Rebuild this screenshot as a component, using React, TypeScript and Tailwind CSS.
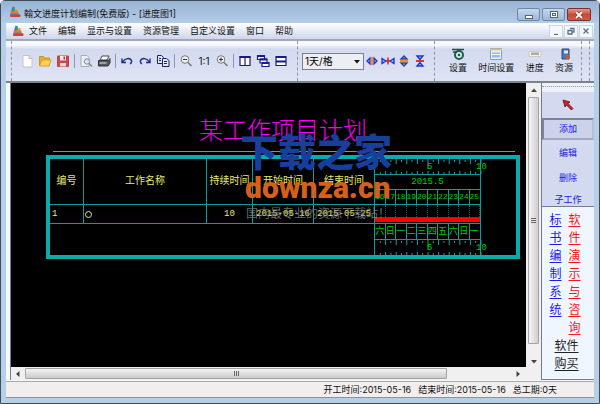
import React from "react";

const UI = "font-['Inter','Noto_Sans_CJK_SC',sans-serif]";
const CAD = "font-['Liberation_Mono','Noto_Sans_CJK_SC',monospace]";

function Logo() {
  return (
    <svg viewBox="0 0 12 12" className="size-3 shrink-0">
      <path d="M3.500 0.500L2 6h4V1.500z" fill="#3b78c8" />
      <path d="M4.500 1.500l1.500 1v4H3.500z" fill="#4fa04a" />
      <path d="M6.500 3h2v3.500h-3z" fill="#e8963a" />
      <rect x="1.500" y="5.500" width="8" height="2.800" rx="1" fill="#e07a3a" />
      <rect x="1" y="8.200" width="10.500" height="2.800" rx="1" fill="#c9433a" />
      <path d="M1.500 8.200h8" stroke="#3a7cc0" />
    </svg>
  );
}

function IconButton({ label, children }: { label: string; children: React.ReactNode }) {
  return (
    <button type="button" aria-label={label} className="flex w-[18px] shrink-0 justify-center">
      <svg viewBox="0 0 14 14" className="size-3.5" fill="none">
        {children}
      </svg>
    </button>
  );
}

const Sep = () => <span className="mx-[2px] h-3.5 w-px shrink-0 bg-[#8f97ad]" />;

function FileTools() {
  return (
    <>
      <IconButton label="新建">
        <path d="M3 1.500h6l3 3v8.500H3z" fill="#fff" stroke="#c2c2cc" />
        <path d="M9 1.500v3h3" stroke="#b5b5c0" />
      </IconButton>
      <IconButton label="打开">
        <path d="M1.500 11.500v-9h4l1 1.500h5v7.500z" fill="#e9ad2c" stroke="#cf9320" />
        <path d="M1.500 12l2.500-6h9l-2 6z" fill="#ffd25a" stroke="#dda22b" />
      </IconButton>
      <IconButton label="保存">
        <path d="M1.500 2h11v10.500h-11z" fill="#c8484c" stroke="#b8464a" />
        <path d="M4 2h6v4.500H4z" fill="#f6e9e9" />
        <path d="M7.500 2.500h1.500v3H7.500z" fill="#b43a3e" />
        <path d="M4 9h6v3.500H4z" fill="#eed0d0" />
      </IconButton>
      <Sep />
      <IconButton label="打印预览">
        <path d="M2 1.500h6l2 2v9H2z" fill="#eef0f6" stroke="#a5aab5" />
        <circle cx="8" cy="7.500" r="2.700" fill="#dbe6ee" stroke="#7f8b98" />
        <path d="M10 9.500l3 3" stroke="#7f8b98" strokeWidth="1.500" />
      </IconButton>
      <IconButton label="打印">
        <path d="M5 2h7l-2 4H3z" fill="#fff" stroke="#444" />
        <path d="M1.500 6.500h10l1.500-2v4.500l-2 3H1.500z" fill="#555b60" stroke="#2e3235" />
        <path d="M2.500 9h7" stroke="#e8e8e8" />
      </IconButton>
      <Sep />
      <IconButton label="撤销">
        <path d="M2 4.500v4h4M2.500 8C5 4 10 3.500 11.500 6.500c.5 1.500 0 2.500-1.500 3.500" stroke="#1c2a8c" strokeWidth="1.400" />
      </IconButton>
      <IconButton label="重做">
        <path d="M12 4.500v4H8M11.500 8C9 4 4 3.500 2.500 6.500c-.5 1.500 0 2.500 1.500 3.500" stroke="#1c2a8c" strokeWidth="1.400" />
      </IconButton>
      <IconButton label="复制">
        <path d="M1.500 1.500h4l2 2v6h-6z" fill="#dfe4f8" stroke="#1c2468" />
        <path d="M6.500 4.500h4l2.500 2v6H6.500z" fill="#dfe4f8" stroke="#1c2468" />
        <path d="M3 4.500h2M3 6.500h2M8 7.500h3M8 9.500h3" stroke="#1c2468" />
      </IconButton>
      <Sep />
      <IconButton label="缩小">
        <circle cx="6" cy="5.500" r="3.800" fill="#eef1f6" stroke="#777" />
        <path d="M4 5.500h4" stroke="#333" />
        <path d="M9 8.500l3.500 3.500" stroke="#777" strokeWidth="1.500" />
      </IconButton>
      <button type="button" className="w-[18px] text-center text-[10px] leading-4">1:1</button>
      <IconButton label="放大">
        <circle cx="6" cy="5.500" r="3.800" fill="#eef1f6" stroke="#777" />
        <path d="M4 5.500h4M6 3.500v4" stroke="#333" />
        <path d="M9 8.500l3.500 3.500" stroke="#777" strokeWidth="1.500" />
      </IconButton>
      <Sep />
      <IconButton label="垂直平铺">
        <path d="M2 2.500h10v9H2zM7 2.500v9" fill="#fff" stroke="#1a1a8c" strokeWidth="1.200" />
        <path d="M1.500 3h11" stroke="#1a1a8c" strokeWidth="2" />
      </IconButton>
      <IconButton label="层叠">
        <path d="M1.500 1.500h7v4h-7zM4 5h7v4H4zM6 8.500h7v4H6z" fill="#fff" stroke="#1a1a8c" strokeWidth="1.200" />
        <path d="M1.500 2h7M4 5.500h7M6 9h7" stroke="#1a1a8c" strokeWidth="1.800" />
      </IconButton>
      <IconButton label="水平平铺">
        <path d="M2 2.500h10v9H2z" fill="#fff" stroke="#1a1a8c" strokeWidth="1.200" />
        <path d="M2 3h10M2 7.500h10" stroke="#1a1a8c" strokeWidth="2" />
      </IconButton>
    </>
  );
}

function ScaleTools() {
  return (
    <>
      <label className="mr-[1px] flex">
        <span className="sr-only">时间刻度</span>
        <span className="relative flex">
          <select className="h-[17px] w-[62px] appearance-none border border-[#7c818c] bg-[#eceef2] pl-[2px] text-[10px] leading-[15px] text-black">
            <option>1天/格</option>
            <option>1周/格</option>
            <option>1月/格</option>
          </select>
          <svg viewBox="0 0 6 4" className="pointer-events-none absolute top-[7px] right-1 h-1 w-1.5">
            <path d="M0 0h6L3 3.500z" fill="#111" />
          </svg>
        </span>
      </label>
      <div className="flex gap-px">
        <button type="button" aria-label="加宽" className="w-[15px]">
          <svg viewBox="0 0 14 14" className="size-3.5" fill="none">
            <path d="M5 4L2 7L5 10zM9 4L12 7L9 10z" fill="#9db4ff" stroke="#2233cc" strokeWidth="1.300" />
            <path d="M7 3v8" stroke="#f09020" strokeWidth="2.500" />
          </svg>
        </button>
        <button type="button" aria-label="缩窄" className="w-[15px]">
          <svg viewBox="0 0 14 14" className="size-3.5" fill="none">
            <path d="M1 4.500L5 7L1 9.500zM13 4.500L9 7L13 9.500z" fill="#9db4ff" stroke="#2233cc" strokeWidth="1.300" />
            <path d="M7 3.500v7M5 7h4" stroke="#e02020" strokeWidth="1.500" />
          </svg>
        </button>
        <button type="button" aria-label="加高" className="w-[15px]">
          <svg viewBox="0 0 14 14" className="size-3.5" fill="none">
            <path d="M4 5L7 2L10 5zM4 9L7 12L10 9z" fill="#9db4ff" stroke="#2a3a9c" strokeWidth="1.300" />
            <path d="M3 7h8" stroke="#f09020" strokeWidth="2.500" />
          </svg>
        </button>
        <button type="button" aria-label="缩低" className="w-[15px]">
          <svg viewBox="0 0 14 14" className="size-3.5" fill="none">
            <path d="M4 2L7 5.500L10 2zM4 12L7 8.500L10 12z" fill="#9db4ff" stroke="#2233cc" strokeWidth="1.300" />
            <path d="M3 7h8" stroke="#e02020" strokeWidth="1.800" />
          </svg>
        </button>
      </div>
    </>
  );
}

function LabelledTool({ label, children }: { label: string; children: React.ReactNode }) {
  return (
    <button type="button" className="flex flex-col items-center text-[9px] leading-[14px] whitespace-nowrap">
      <svg viewBox="0 0 14 14" className="size-3.5" fill="none">
        {children}
      </svg>
      {label}
    </button>
  );
}

function TitleBar() {
  return (
    <header className="flex h-[22px] items-center bg-linear-to-b from-[#98b3d3] to-[#b4cce6] px-2">
      <Logo />
      <h1 className="mt-1 ml-[3px] flex-1 text-[9px] leading-4">翰文进度计划编制(免费版) - [进度图1]</h1>
      <div className="mt-[5px] flex gap-[2px]">
        <button type="button" aria-label="最小化" className="flex h-[13px] w-[23px] items-center justify-center rounded-[2px] border border-[#6d87a8] bg-linear-to-b from-[#c5d8ec] to-[#9db9d8]">
          <span className="mt-1 h-1 w-2 border border-[#53627a] bg-white" />
        </button>
        <button type="button" aria-label="最大化" className="flex h-[13px] w-[23px] items-center justify-center rounded-[2px] border border-[#6d87a8] bg-linear-to-b from-[#c5d8ec] to-[#9db9d8]">
          <span className="flex h-[7px] w-2 items-center justify-center border border-[#53627a] bg-white">
            <span className="h-[3px] w-1 border border-[#53627a]" />
          </span>
        </button>
        <button type="button" aria-label="关闭" className="flex h-[13px] w-[24px] items-center justify-center rounded-[2px] border border-[#7c2f2c] bg-linear-to-b from-[#e09a8c] via-[#c9483a] to-[#cf5a48]">
          <svg viewBox="0 0 8 8" className="size-2">
            <path d="M1 1l6 6M7 1L1 7" stroke="#6b2a26" strokeWidth="3" />
            <path d="M1 1l6 6M7 1L1 7" stroke="#fff" strokeWidth="1.800" />
          </svg>
        </button>
      </div>
    </header>
  );
}

function MenuBar() {
  const items = ["文件", "编辑", "显示与设置", "资源管理", "自定义设置", "窗口", "帮助"];
  return (
    <nav className="flex h-4 items-center bg-linear-to-b from-white via-[#e6eaf6] to-[#cfd6ec] pl-[6px]">
      <Logo />
      <div className="ml-[5px] flex flex-1 gap-[11px] text-[9px] leading-4">
        {items.map((item) => (
          <button type="button" key={item}>{item}</button>
        ))}
      </div>
      <div className="flex gap-px pr-px">
        {["M2 7.500h4", "M3 1.500h4v3.500H5M1 3.500h4v3.500H1z", "M1.500 1.500l5 5M6.500 1.500l-5 5"].map((d, i) => (
          <button
            type="button"
            key={d}
            aria-label={["最小化子窗口", "还原子窗口", "关闭子窗口"][i]}
            className="flex h-[13px] w-[14px] items-center justify-center border border-[#c9d4e6] bg-[#f4f7fc]"
          >
            <svg viewBox="0 0 8 8" className="size-2" fill="none">
              <path d={d} stroke="#5b6f8a" strokeWidth="1.300" />
            </svg>
          </button>
        ))}
      </div>
    </nav>
  );
}

function ToolBar() {
  return (
    <div className="flex h-[44px] shrink-0 border-y-2 border-t-[#a3a7b3] border-b-[#7d828d] bg-linear-to-b from-[#f6f8fd] from-10% via-[#d3daee] via-20% to-[#dfe4f5]">
      <div className="ml-[5px] flex w-[286px] items-center border-l border-dashed border-[#8d95ab] pl-[6px]">
        <FileTools />
      </div>
      <div className="flex w-[137px] items-center border-l border-dashed border-[#8d95ab] pl-1">
        <ScaleTools />
      </div>
      <div className="flex flex-1 items-center justify-between border-l border-dashed border-[#8d95ab] pr-2 pl-[14px]">
        <LabelledTool label="设置">
          <circle cx="8" cy="8" r="4" fill="#d7ece2" stroke="#1d5e4c" strokeWidth="2" />
          <circle cx="8" cy="8" r="1.300" fill="#1d5e4c" />
          <path d="M1 2.500h12M2 5h4" stroke="#254d48" strokeWidth="1.600" />
        </LabelledTool>
        <LabelledTool label="时间设置">
          <path d="M1.500 1.500h11v11h-11z" fill="#eaf3fc" stroke="#7b9fd0" />
          <path d="M1 2.500h12" stroke="#f0bd70" strokeWidth="2" />
          <path d="M3 5.500h8v5H3z" fill="#8fbcf0" />
          <path d="M3 7.500h8" stroke="#fff" />
        </LabelledTool>
        <LabelledTool label="进度">
          <path d="M1 4.500h12v5H1z" fill="#f3efe4" stroke="#cfcbc0" />
          <path d="M4 5.500v2.500M6 5.500v2.500M8 5.500v2.500M10 5.500v2.500" stroke="#666" />
        </LabelledTool>
        <LabelledTool label="资源">
          <path d="M5 2h7v10H5z" fill="#4a77b8" stroke="#294d82" />
          <path d="M7 3.500h4v3H7z" fill="#dfeaff" />
          <path d="M9 8h4v4H9z" fill="#c65d30" />
        </LabelledTool>
      </div>
      <span className="w-2 border-l border-dashed border-[#8d95ab]" />
      <span className="w-[5px] border-l border-dashed border-[#8d95ab]" />
    </div>
  );
}

const days = ["16", "17", "18", "19", "20", "21", "22", "23", "24", "25"];
const weekdays = ["六", "日", "一", "二", "三", "四", "五", "六", "日", "一"];

function Scale() {
  return (
    <svg viewBox="0 0 106 15" className="block h-[15px] w-[106px] overflow-visible">
      {days.map((day, i) => (
        <path
          key={day}
          d={`M${i * 10.6 + 5.3} 1v2M${i * 10.6 + 10.6} 0v${i === 4 ? 10 : 5}M${i * 10.6 + 5.3} 15v-2M${i * 10.6 + 10.6} 15v-3`}
          stroke="#12a0a0"
        />
      ))}
      <text x="52" y="10" fontSize="9" fill="#00c800" className={CAD}>5</text>
      <text x="101" y="10" fontSize="9" fill="#00c800" className={CAD}>10</text>
    </svg>
  );
}

const line = "border-[#109a9a]";

function Cells({ items, cell }: { items: string[]; cell: string }) {
  return (
    <div className="grid grid-cols-10 text-[#00d000]">
      {items.map((item, i) => (
        <span key={i} className={`flex justify-center border-r ${i === 9 ? "border-transparent" : line} ${cell}`}>{item}</span>
      ))}
    </div>
  );
}

function Chart() {
  const cell = `border-r border-b ${line} p-0 font-normal`;
  return (
    <table className={`w-full table-fixed border-separate border-spacing-0 border-4 border-[#0aabab] text-center text-[10px] leading-3 text-[#e8e878] ${CAD}`}>
      <colgroup>
        <col className="w-[34px]" />
        <col />
        <col className="w-[46px]" />
        <col className="w-[61px]" />
        <col className="w-[61px]" />
        <col className="w-[106px]" />
        <col className="w-[35px]" />
      </colgroup>
      <tbody>
        <tr>
          {["编号", "工作名称", "持续时间", "开始时间", "结束时间"].map((name) => (
            <th key={name} rowSpan={3} scope="col" className={`${cell} whitespace-nowrap`}>{name}</th>
          ))}
          <td className={`h-4 ${cell}`}><Scale /></td>
          <td rowSpan={3} className="p-0" />
        </tr>
        <tr>
          <td className={`h-[15px] ${cell} text-[9px] text-[#00d000]`}>2015.5</td>
        </tr>
        <tr>
          <td className={`h-[15px] ${cell}`}><Cells items={days} cell="h-[14px] items-center text-[8px]" /></td>
        </tr>
        <tr>
          <td className={`h-[19px] ${cell} pl-[2px] text-left text-[9px]`}>1</td>
          <td className={`${cell} pl-px text-left`}>
            <span className="block size-[7px] rounded-full border border-[#e8e878]" />
          </td>
          <td className={`${cell} text-[9px]`}>10</td>
          <td className={`${cell} text-[9px]`}>2015-05-16</td>
          <td className={`${cell} text-[9px]`}>2015-05-25</td>
          <td className={`${cell} align-bottom`}>
            <div className="grid h-[12px] grid-cols-10">
              {days.map((day) => (
                <span key={day} className="border-r border-dotted border-[#0c6060]" />
              ))}
            </div>
            <div className="mb-px h-[5px] bg-[#f80000]" />
          </td>
          <td />
        </tr>
        <tr>
          <td colSpan={5} rowSpan={2} className={`border-r ${line} p-0`} />
          <td className={`h-4 ${cell}`}><Cells items={weekdays} cell="h-[15px] items-center text-[9px]" /></td>
          <td />
        </tr>
        <tr>
          <td className={`h-[14px] border-r ${line} p-0`}><Scale /></td>
          <td />
        </tr>
      </tbody>
    </table>
  );
}

function Canvas() {
  return (
    <main className="relative flex-1 overflow-hidden bg-black pr-[6px] pl-[35px]">
      <h2 className={`mt-[33px] text-center text-[24px] leading-[34px] font-light text-[#f000f0] ${CAD}`}>某工作项目计划</h2>
      <div className="mt-px mr-[5px] mb-[3px] ml-[7px] h-px bg-[#14c0c0]" />
      <Chart />
      <div className="pointer-events-none absolute top-[47px] left-[229px] flex flex-col whitespace-nowrap">
        <span className="font-['Noto_Sans_CJK_SC',sans-serif] text-[38px] leading-10 font-black text-[#173f9c]">下载之家</span>
        <span className="ml-[5px] font-['Roboto','Liberation_Sans',sans-serif] text-[30px] leading-9 font-black text-[#d4601a]">downza.cn</span>
        <span className="-mt-px ml-[6px] font-['Noto_Sans_CJK_SC',sans-serif] text-[12px] leading-4 text-[#858585]/80">国内最专业的资源下载站！</span>
      </div>
    </main>
  );
}

function Arrow({ d }: { d: string }) {
  return (
    <svg viewBox="0 0 6 6" className="size-1.5 shrink-0">
      <path d={d} fill="#444" />
    </svg>
  );
}

function VerticalScroll() {
  return (
    <div className="flex w-[15px] shrink-0 flex-col items-center bg-[#f0f0f0]">
      <button type="button" aria-label="向上滚动" className="flex h-[14px] items-center"><Arrow d="M0 5h6L3 1.500z" /></button>
      <div className="flex w-[11px] flex-1 flex-col items-center justify-center gap-px rounded-[1px] border border-[#a4a4a4] bg-linear-to-r from-[#f5f5f5] to-[#cfcfcf]">
        <span className="h-px w-[5px] bg-[#666]" />
        <span className="h-px w-[5px] bg-[#666]" />
        <span className="h-px w-[5px] bg-[#666]" />
      </div>
      <button type="button" aria-label="向下滚动" className="mt-3 flex h-[11px] items-center"><Arrow d="M0 1h6L3 4.500z" /></button>
    </div>
  );
}

function HorizontalScroll() {
  return (
    <div className="flex h-[13px] shrink-0 items-center bg-[#f0f0f0]">
      <button type="button" aria-label="向左滚动" className="flex w-[14px] justify-center"><Arrow d="M4.500 0v6L1 3z" /></button>
      <div className="mr-[66px] flex h-[11px] flex-1 items-center justify-center gap-px rounded-[1px] border border-[#a4a4a4] bg-linear-to-b from-[#f5f5f5] to-[#cacaca]">
        <span className="h-[5px] w-px bg-[#666]" />
        <span className="h-[5px] w-px bg-[#666]" />
        <span className="h-[5px] w-px bg-[#666]" />
      </div>
      <button type="button" aria-label="向右滚动" className="mr-[18px] flex w-[10px] justify-center"><Arrow d="M1.500 0v6L5 3z" /></button>
    </div>
  );
}

function VerticalLink({ text, cell }: { text: string; cell: string }) {
  return (
    <a href="#" className={`flex w-3 flex-col ${cell}`}>
      {text.split("").map((char, i) => (
        <span key={i} className="underline underline-offset-2">{char}</span>
      ))}
    </a>
  );
}

function SidePanel() {
  return (
    <aside className="flex w-[53px] shrink-0 flex-col border-l border-[#777c88] bg-[#d3daf0]">
      <div className="flex flex-col text-[9px] text-[#1a1ae0]">
        <div className="h-[9px] shrink-0 bg-[#edf1fa] pt-[3px]">
          <div className="border-t border-dotted border-[#8d95ab]" />
        </div>
        <button type="button" aria-label="选择" className="flex h-[26px] shrink-0 items-center justify-center">
          <svg viewBox="0 0 12 12" className="size-3">
            <path d="M1 1l7 2-2 1.500 5 5-1.500 1.500-5-5L3 8z" fill="#d41e2c" stroke="#5a1016" strokeWidth=".8" />
          </svg>
        </button>
        <button type="button" className="h-[22px] shrink-0 border-2 border-[#7b829a] border-r-[#b7bed6] border-b-[#a2a9c0] bg-[#cbd2ea]">添加</button>
        <button type="button" className="h-[25px] shrink-0">编辑</button>
        <button type="button" className="h-[25px] shrink-0">删除</button>
        <button type="button" className="h-4 shrink-0 pt-[3px] leading-[13px]">子工作</button>
      </div>
      <div className="flex flex-1 flex-col items-center border-y border-[#777c88] bg-[#f0f6ff] pt-[3px] pr-[3px] font-['Noto_Sans_CJK_SC',sans-serif] text-[12px] leading-[18px]">
        <div className="flex gap-[7px] pr-[3px]">
          <VerticalLink text="标书编制系统" cell="text-[#1a1aee]" />
          <VerticalLink text="软件演示与咨询" cell="text-[#f01818]" />
        </div>
        <a href="#" className="w-6 text-[#222] underline underline-offset-2">软件购买</a>
      </div>
    </aside>
  );
}

export default function App() {
  return (
    <div className={`flex min-h-screen flex-col rounded-t-[5px] border border-[#3f4b5a] bg-[#b6cfe8] text-[#111] ${UI}`}>
      <TitleBar />
      <div className="mx-[5px] mb-[5px] flex flex-1 flex-col border-b border-[#8a94a0] bg-[#f6f8fc]">
        <MenuBar />
        <ToolBar />
        <div className="flex flex-1">
          <div className="ml-1 flex flex-1 flex-col border-l border-[#777c88]">
            <div className="flex flex-1">
              <Canvas />
              <VerticalScroll />
            </div>
            <HorizontalScroll />
          </div>
          <SidePanel />
        </div>
        <footer className="mt-px flex h-4 shrink-0 items-center justify-end gap-[7px] border-t border-[#a5a9b0] bg-[#f2eeed] pr-[37px] text-[9px] leading-[14px]">
          <span>开工时间:2015-05-16</span>
          <span>结束时间:2015-05-16</span>
          <span>总工期:0天</span>
        </footer>
      </div>
    </div>
  );
}
